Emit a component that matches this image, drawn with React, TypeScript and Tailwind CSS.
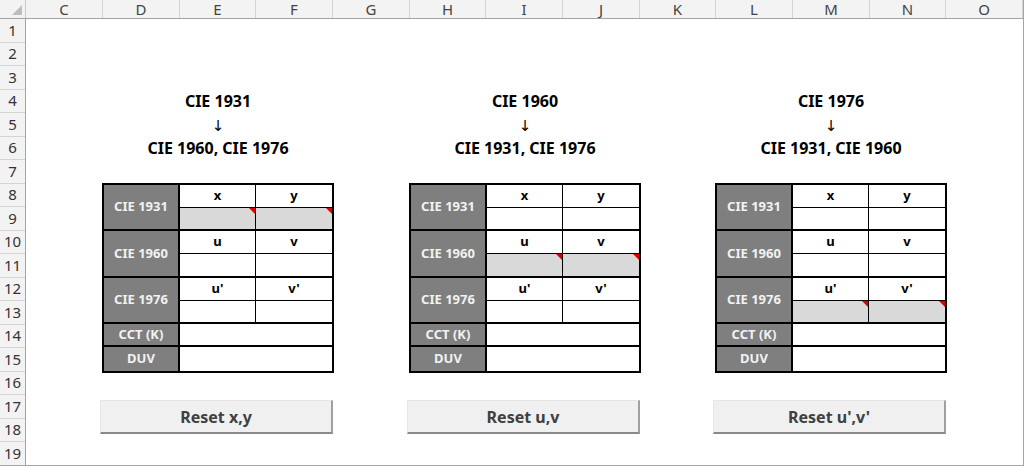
import React from "react";

const COLS = ["C", "D", "E", "F", "G", "H", "I", "J", "K", "L", "M", "N", "O"];
const COL_W = [
  "w-[77px]", "w-[77px]", "w-[76px]", "w-[77px]", "w-[77px]", "w-[76px]", "w-[77px]",
  "w-[77px]", "w-[76px]", "w-[77px]", "w-[77px]", "w-[76px]", "w-[77px]",
];
const ROWS = Array.from({ length: 19 }, (_, i) => i + 1);

type Block = {
  col: string;
  top: string;
  bottom: string;
  highlight: number;
  button: string;
};

const BLOCKS: Block[] = [
  { col: "col-start-2", top: "CIE 1931", bottom: "CIE 1960, CIE 1976", highlight: 0, button: "Reset x,y" },
  { col: "col-start-6", top: "CIE 1960", bottom: "CIE 1931, CIE 1976", highlight: 1, button: "Reset u,v" },
  { col: "col-start-10", top: "CIE 1976", bottom: "CIE 1931, CIE 1960", highlight: 2, button: "Reset u',v'" },
];

const SECTIONS = [
  { label: "CIE 1931", a: "x", b: "y" },
  { label: "CIE 1960", a: "u", b: "v" },
  { label: "CIE 1976", a: "u'", b: "v'" },
];

function Flag() {
  return (
    <div className="absolute top-0 right-0 w-0 h-0 border-l-[6px] border-l-transparent border-t-[6px] border-t-[#e00000]" />
  );
}

function DataTable({ highlight }: { highlight: number }) {
  return (
    <div className="grid grid-cols-3 grid-rows-8 h-full border-2 border-black bg-white">
      {SECTIONS.map((s, i) => (
        <React.Fragment key={s.label}>
          <div className="row-span-2 bg-[#7f7f7f] border-r-2 border-b-2 border-black flex items-center justify-center text-[13px] font-bold text-[#f2f2f2]">
            {s.label}
          </div>
          <div className="border-r border-b border-black flex items-center justify-center text-[13px] font-bold text-black">
            {s.a}
          </div>
          <div className="border-b border-black flex items-center justify-center text-[13px] font-bold text-black">
            {s.b}
          </div>
          <div className={`relative border-r border-b-2 border-black ${highlight === i ? "bg-[#d9d9d9]" : "bg-white"}`}>
            {highlight === i && <Flag />}
          </div>
          <div className={`relative border-b-2 border-black ${highlight === i ? "bg-[#d9d9d9]" : "bg-white"}`}>
            {highlight === i && <Flag />}
          </div>
        </React.Fragment>
      ))}
      <div className="bg-[#7f7f7f] border-r-2 border-b-2 border-black flex items-center justify-center text-[13px] font-bold text-[#f2f2f2]">
        CCT (K)
      </div>
      <div className="col-span-2 border-b-2 border-black" />
      <div className="bg-[#7f7f7f] border-r-2 border-black flex items-center justify-center text-[13px] font-bold text-[#f2f2f2]">
        DUV
      </div>
      <div className="col-span-2" />
    </div>
  );
}

export default function App() {
  return (
    <div
      className="w-[1024px] h-[466px] overflow-hidden bg-white flex flex-col border-r border-b border-[#a6a6a6]"
      style={{ fontFamily: '"Noto Sans", "Open Sans", "DejaVu Sans", sans-serif' }}
    >
      {/* column header */}
      <div className="flex h-[19px] shrink-0 bg-[#f3f3f3] border-b border-[#a3a3a3]">
        <div className="relative w-[26px] shrink-0 border-r border-[#c8c8c8]">
          <div className="absolute right-[3px] bottom-[3px] w-0 h-0 border-l-[10px] border-l-transparent border-b-[10px] border-b-[#bdbdbd]" />
        </div>
        {COLS.map((c, i) => (
          <div
            key={c}
            className={`${COL_W[i]} shrink-0 border-r border-[#d4d4d4] flex items-center justify-center text-[15px] leading-none text-[#444]`}
          >
            {c}
          </div>
        ))}
      </div>

      <div className="flex flex-1">
        {/* row header */}
        <div className="w-[26px] shrink-0 bg-[#f3f3f3] border-r border-[#a3a3a3] flex flex-col">
          {ROWS.map((r) => (
            <div
              key={r}
              className="h-[23.5px] shrink-0 border-b border-[#d4d4d4] flex items-center justify-center text-[15px] leading-none text-[#333]"
            >
              {r}
            </div>
          ))}
        </div>

        {/* canvas */}
        <div className="grid grid-cols-[77px_77px_76px_77px_77px_76px_77px_77px_76px_77px_77px_76px_77px] grid-rows-[repeat(19,23.5px)]">
          {BLOCKS.map((b) => (
            <React.Fragment key={b.top}>
              <div className={`${b.col} col-span-3 row-start-4 flex items-center justify-center text-[16px] font-bold text-black`}>
                {b.top}
              </div>
              <div className={`${b.col} col-span-3 row-start-5 flex items-center justify-center text-[15px] text-black`}>
                ↓
              </div>
              <div className={`${b.col} col-span-3 row-start-6 flex items-center justify-center text-[16px] font-bold text-black`}>
                {b.bottom}
              </div>
              <div className={`${b.col} col-span-3 row-start-8 row-span-8 -ml-px -mr-px -mt-px -mb-px`}>
                <DataTable highlight={b.highlight} />
              </div>
              <div className={`${b.col} col-span-3 row-start-17 row-span-2 -ml-[3px] mt-[5px] mb-[8px]`}>
                <div className="h-full bg-[#f0f0f0] border-t border-l border-[#e6e6e6] border-r-2 border-b-2 border-r-[#a0a0a0] border-b-[#8a8a8a] flex items-center justify-center text-[16px] font-bold text-[#404040]">
                  {b.button}
                </div>
              </div>
            </React.Fragment>
          ))}
        </div>
      </div>
    </div>
  );
}
